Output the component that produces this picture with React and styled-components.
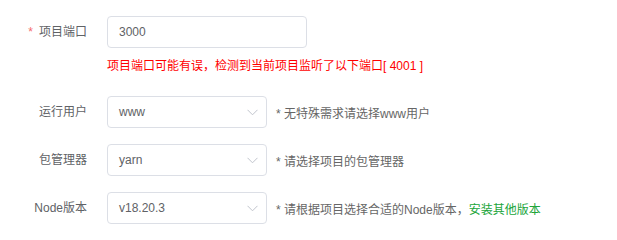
import React from "react";
import styled, { createGlobalStyle } from "styled-components";

const GlobalStyle = createGlobalStyle`
  html, body {
    margin: 0;
    padding: 0;
    background: #fff;
  }
  body {
    font-family: "Liberation Sans", "Noto Sans CJK SC", sans-serif;
    font-size: 12px;
    color: #606266;
  }
`;

const Form = styled.div`
  width: 617px;
  height: 235px;
  padding-top: 16px;
  box-sizing: border-box;
`;

const Item = styled.div`
  display: flex;
  align-items: flex-start;
  margin-bottom: ${({ $gap }) => $gap ?? 16}px;
`;

const Label = styled.div`
  width: 87px;
  flex-shrink: 0;
  height: 32px;
  line-height: 32px;
  text-align: right;
  color: #606266;
  font-size: 12px;
`;

const Required = styled.span`
  color: #f56c6c;
  margin-right: 6px;
`;

const Content = styled.div`
  margin-left: 20px;
  display: flex;
  flex-direction: column;
`;

const Line = styled.div`
  display: flex;
  align-items: center;
  height: 32px;
`;

const Input = styled.input`
  width: 200px;
  height: 32px;
  box-sizing: border-box;
  border: 1px solid #dcdfe6;
  border-radius: 4px;
  padding: 0 11px;
  font-family: inherit;
  font-size: 12px;
  color: #606266;
  outline: none;
`;

const Select = styled.div`
  width: 160px;
  height: 32px;
  box-sizing: border-box;
  border: 1px solid #dcdfe6;
  border-radius: 4px;
  padding: 0 8px 0 11px;
  display: flex;
  align-items: center;
  justify-content: space-between;
  color: #606266;
`;

const Hint = styled.span`
  margin-left: 9px;
  color: #666;
  white-space: nowrap;
`;

const Link = styled.a`
  color: #20a53a;
  text-decoration: none;
  cursor: pointer;
`;

const ErrorText = styled.div`
  margin-top: 8px;
  line-height: 20px;
  color: #f00;
  white-space: nowrap;
`;

const Chevron = () => (
  <svg width="11" height="7" viewBox="0 0 11 7">
    <polyline points="0.5,0.8 5.5,5.8 10.5,0.8" fill="none" stroke="#c0c4cc" strokeWidth="1" />
  </svg>
);

const SelectField = ({ value }) => (
  <Select>
    <span>{value}</span>
    <Chevron />
  </Select>
);

export default function App() {
  return (
    <>
      <GlobalStyle />
      <Form>
        <Item $gap={20}>
          <Label>
            <Required>*</Required>项目端口
          </Label>
          <Content>
            <Line>
              <Input defaultValue="3000" />
            </Line>
            <ErrorText>项目端口可能有误，检测到当前项目监听了以下端口[ 4001 ]</ErrorText>
          </Content>
        </Item>
        <Item>
          <Label>运行用户</Label>
          <Content>
            <Line>
              <SelectField value="www" />
              <Hint>* 无特殊需求请选择www用户</Hint>
            </Line>
          </Content>
        </Item>
        <Item>
          <Label>包管理器</Label>
          <Content>
            <Line>
              <SelectField value="yarn" />
              <Hint>* 请选择项目的包管理器</Hint>
            </Line>
          </Content>
        </Item>
        <Item>
          <Label>Node版本</Label>
          <Content>
            <Line>
              <SelectField value="v18.20.3" />
              <Hint>
                * 请根据项目选择合适的Node版本，<Link>安装其他版本</Link>
              </Hint>
            </Line>
          </Content>
        </Item>
      </Form>
    </>
  );
}
